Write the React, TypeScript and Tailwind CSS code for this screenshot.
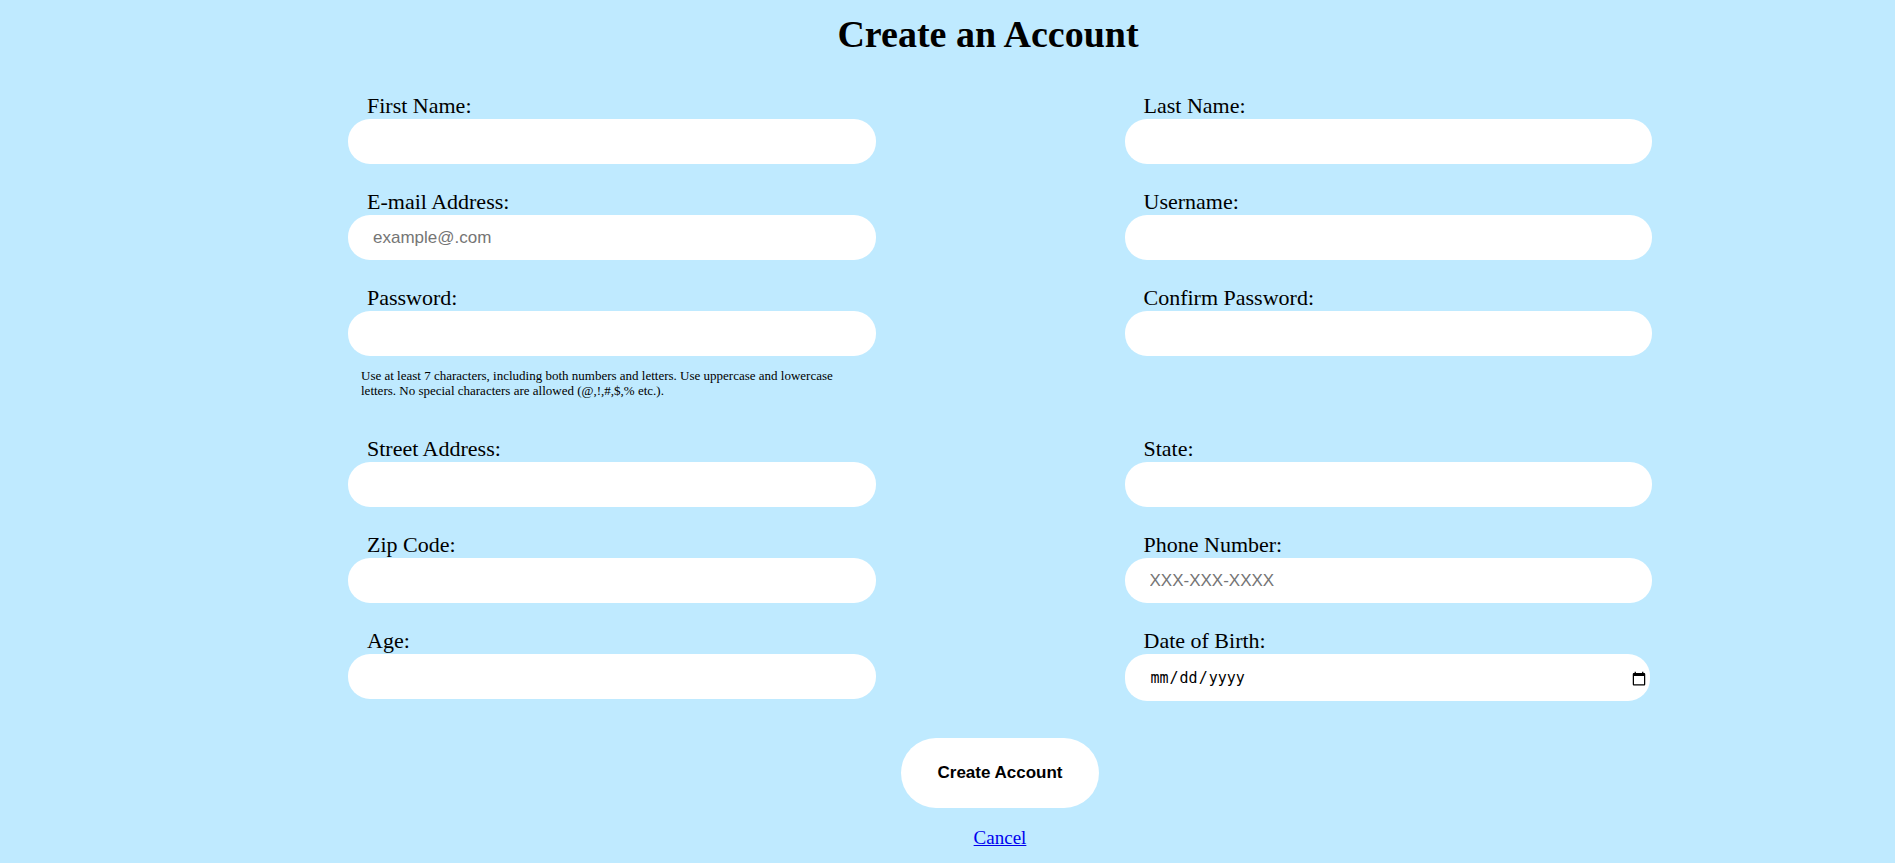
import React from "react";

type FieldProps = {
  id: string;
  label: string;
  type?: string;
  placeholder?: string;
  hint?: string;
};

function Field({ id, label, type = "text", placeholder, hint }: FieldProps) {
  const shape =
    type === "date"
      ? "mr-[2px] h-[47px] pl-[25px] pr-px pt-[2px] font-['DejaVu_Sans_Mono',monospace] text-[15px] [&::-webkit-calendar-picker-indicator]:size-4"
      : "h-[45px] px-[25px] font-['Liberation_Sans',Arial,sans-serif] text-[17px]";

  return (
    <div className="flex flex-col">
      <label htmlFor={id} className="pl-[19px] text-[22px] leading-[26px]">
        {label}
      </label>
      <input
        id={id}
        name={id}
        type={type}
        placeholder={placeholder}
        aria-describedby={hint ? `${id}-hint` : undefined}
        className={`rounded-[22px] bg-white text-black placeholder:text-[#757575] ${shape}`}
      />
      {hint && (
        <p id={`${id}-hint`} className="mb-[13px] mt-3 pl-[13px] pr-10 text-[13px] leading-[15px]">
          {hint}
        </p>
      )}
    </div>
  );
}

const fields: FieldProps[] = [
  { id: "first-name", label: "First Name:" },
  { id: "last-name", label: "Last Name:" },
  { id: "email", label: "E-mail Address:", type: "email", placeholder: "example@.com" },
  { id: "username", label: "Username:" },
  {
    id: "password",
    label: "Password:",
    type: "password",
    hint: "Use at least 7 characters, including both numbers and letters. Use uppercase and lowercase letters. No special characters are allowed (@,!,#,$,% etc.).",
  },
  { id: "confirm-password", label: "Confirm Password:", type: "password" },
  { id: "street", label: "Street Address:" },
  { id: "state", label: "State:" },
  { id: "zip", label: "Zip Code:" },
  { id: "phone", label: "Phone Number:", type: "tel", placeholder: "XXX-XXX-XXXX" },
  { id: "age", label: "Age:" },
  { id: "birth-date", label: "Date of Birth:", type: "date" },
];

export default function App() {
  return (
    <main className="min-h-screen bg-[#bfeaff] pb-2 pl-[348px] pr-[243px] pt-[13px] font-['Liberation_Serif','Times_New_Roman',serif] text-black">
      <h1 className="pr-6 text-center text-[38px] font-bold leading-[42px]">Create an Account</h1>
      <form className="mt-[38px]">
        <div className="grid grid-cols-2 gap-x-[249px] gap-y-[25px]">
          {fields.map((field) => (
            <Field key={field.id} {...field} />
          ))}
        </div>
        <div className="mt-[37px] flex flex-col items-center gap-[19px]">
          <button
            type="submit"
            className="h-[70px] rounded-[35px] bg-white px-9 font-['Liberation_Sans',Arial,sans-serif] text-[17px] font-bold"
          >
            Create Account
          </button>
          <a href="#" className="text-[19px] leading-[22px] text-[#0000ee] underline">
            Cancel
          </a>
        </div>
      </form>
    </main>
  );
}
